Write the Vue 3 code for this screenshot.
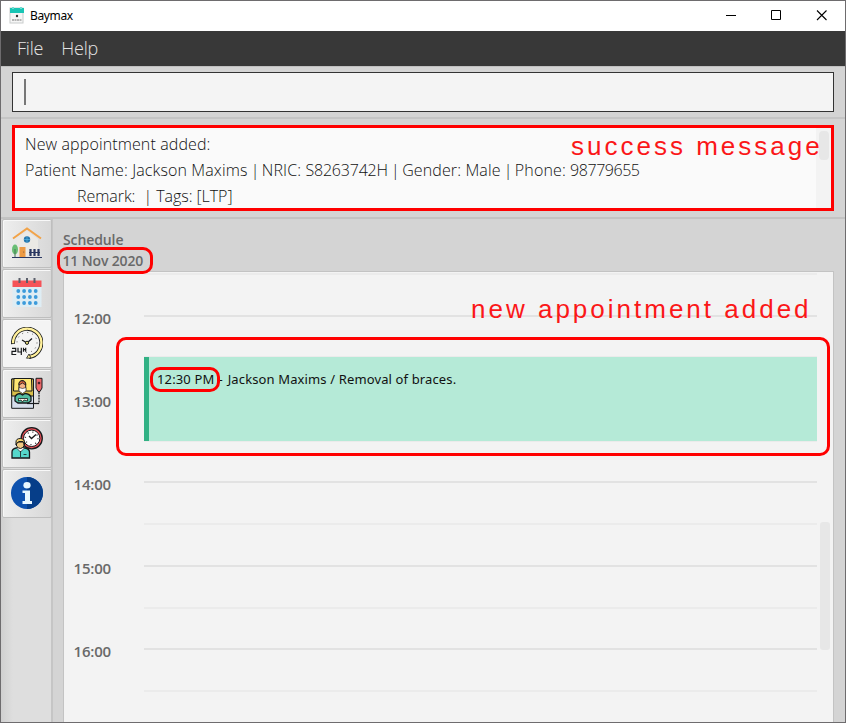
<script setup>
import { ref } from 'vue'

const menus = ['File', 'Help']
const command = ref('')
const navItems = ['home', 'calendar', 'schedule', 'patient', 'appointment', 'info']
const active = 'schedule'
const slots = [
  { hour: '', half: true },
  { hour: '12:00' }, { hour: '', half: true },
  { hour: '13:00' }, { hour: '', half: true },
  { hour: '14:00' }, { hour: '', half: true },
  { hour: '15:00' }, { hour: '', half: true },
  { hour: '16:00' }, { hour: '', half: true },
]
</script>

<template>
  <div class="window">
    <header class="titlebar">
      <svg class="logo" width="16" height="17" viewBox="0 0 16 17">
        <rect x="1" y="1" width="13" height="15" fill="#f6f6f6" stroke="#c9cccc" />
        <path d="M1 1H15V6H1Z" fill="#19c5b5" />
        <path d="M4 0V2M12 0V2" stroke="#71ded3" stroke-width="2" />
        <circle cx="8" cy="9" r="1.2" fill="#333" />
        <path d="M3 13H13" stroke="#777" stroke-dasharray="2 .5" />
      </svg>
      <span class="title">Baymax</span>
      <div class="controls">
        <svg width="102" height="12" viewBox="0 0 102 12">
          <path d="M0 5.500H10M45.500 .5H54.500V9.500H45.500Z" fill="none" stroke="#000" />
          <path d="M91 .5L100.500 10M100.500 .5L91 10" stroke="#000" stroke-width="1.100" />
        </svg>
      </div>
    </header>
    <nav class="menubar"><span v-for="m in menus" :key="m">{{ m }}</span></nav>
    <div class="command"><div class="field"><i class="caret"></i>{{ command }}</div></div>
    <section class="result">
      <div class="result-box">
        <div class="result-text">
          <p>New appointment added:</p>
          <p>Patient Name: Jackson Maxims<span class="pipe"> | </span>NRIC: <span class="nric">S8263742H</span><span class="pipe"> | </span>Gender: Male<span class="pipe"> | </span>Phone: <span class="phone">98779655</span></p>
          <p class="indent">Remark:&nbsp; | Tags: [LTP]</p>
        </div>
        <div class="result-scroll"><i></i></div>
      </div>
      <span class="note success">success message</span>
    </section>
    <main class="body">
      <aside class="sidebar">
        <button v-for="item in navItems" :key="item" :class="{ active: item === active }" :aria-label="item">
          <svg v-if="item === 'home'" width="32" height="32" viewBox="0 0 32 32">
            <path d="M6 12L16 4L27 12V29H6Z" fill="#ebe9e5" />
            <path d="M2 11.500L16 1.500L30 11.500" fill="none" stroke="#f2a348" stroke-width="2" />
            <circle cx="16" cy="12.500" r="3.200" fill="#2376ad" />
            <path d="M16 9.500V15.500M13 12.500H19" stroke="#57b5df" stroke-width=".7" />
            <rect x="8.500" y="20" width="6" height="10" fill="#ed9a43" />
            <circle cx="12.700" cy="25" r=".6" fill="#74513e" />
            <ellipse cx="4" cy="22.500" rx="3" ry="5" fill="#69be75" />
            <path d="M4 22V30" stroke="#467b55" />
            <path d="M19.500 22V29M23.500 22V29M27.500 22V29" stroke="#2b3862" stroke-width="2.200" />
            <path d="M18 25.500H29M1 30.500H31" stroke="#2b3862" stroke-width="1.200" />
          </svg>
          <svg v-else-if="item === 'calendar'" width="32" height="32" viewBox="0 0 32 32">
            <path d="M1.500 9H30.500V30H1.500Z" fill="#deedf4" />
            <path d="M1.500 3.500H30.500V10H1.500Z" fill="#f55358" />
            <path d="M8.500 1V6M16 1V6M23.500 1V6" stroke="#5b5f6b" stroke-width="2" />
            <g fill="#3c9bdb">
              <template v-for="y in 3" :key="y"><circle v-for="x in 4" :key="x" :cx="x * 5.8 + 1.5" :cy="y * 6 + 8" r="1.900" /></template>
            </g>
          </svg>
          <svg v-else-if="item === 'schedule'" width="32" height="32" viewBox="0 0 32 32">
            <path d="M2 17A14.200 14.200 0 1 1 18 30" fill="none" stroke="#17191b" stroke-width="4" />
            <path d="M2 16.300A14.200 14.200 0 1 1 19 29.800" fill="none" stroke="#fff09b" stroke-width="2.400" />
            <path d="M18 27L15.500 31.200L20 31Z" fill="#fff09b" stroke="#17191b" stroke-width=".8" />
            <circle cx="16" cy="15.500" r="10" fill="none" stroke="#555" stroke-dasharray="1 4.230" />
            <path d="M11 13L16 16L21 11.500" fill="none" stroke="#17191b" stroke-width="1.300" />
            <circle cx="16" cy="15.800" r="1.600" fill="#eadf7b" stroke="#17191b" />
            <path d="M0 19H14V29H0Z" fill="#f4f4f4" />
            <path d="M1 21.300H4.700V24.300H1V27.500H5.200M7 20.700V25H11M10.300 20.700V28M12.500 20.700V24.800M12.500 22.700H14.700V24.800M14.700 20.700V22.500" fill="none" stroke="#17191b" stroke-width="1.200" />
          </svg>
          <svg v-else-if="item === 'patient'" width="32" height="32" viewBox="0 0 32 32" stroke="#171a1c">
            <path d="M.7 2H22.500V31.300H.7Z" fill="#d5deec" />
            <path d="M.7 2H22.500V19H.7Z" fill="#d9bf4a" />
            <path d="M3 1.500H20.500L21 14H2.500Z" fill="#ffe872" />
            <path d="M8 8C7 2 15.500 2 14.700 8V13L11.500 16L8 13Z" fill="#f4b489" />
            <path d="M8 8C7.500 2.500 15 2.500 14.700 8L11.500 6Z" fill="#d9653c" stroke-width=".8" />
            <path d="M8 10.500L11.500 11.500L15 10.500V14L11.500 16.500L8 14Z" fill="#fff" stroke-width=".6" />
            <path d="M4 24V20Q5 17 9 16.500L11.500 18L14 16.500Q19 17 20 20V24L17 26H7Z" fill="#54bea2" stroke-width="1.300" />
            <path d="M7.500 21.500H16.500V24L13 23L11.500 25L10 23L7.500 24Z" fill="#f7efe2" stroke-width=".8" />
            <path d="M25 1.300H31V11L29 14.500H27L25 11Z" fill="#ed686a" />
            <path d="M28 15V26.500" fill="none" stroke-width="1.200" stroke-dasharray="2 .8" />
            <path d="M28 26.500H16" stroke-width="1.200" />
            <circle cx="28" cy="6" r="1" fill="#4e1c27" stroke-width=".6" />
          </svg>
          <svg v-else-if="item === 'appointment'" width="32" height="32" viewBox="0 0 32 32" stroke="#17191b">
            <circle cx="20.700" cy="11.300" r="10.600" fill="#e85159" stroke-width="1.300" />
            <circle cx="20.700" cy="11.300" r="8.200" fill="#fff" />
            <circle cx="20.700" cy="11.300" r="6.300" fill="none" stroke-width="1.200" stroke-dasharray="1 3.950" />
            <path d="M18 9L20.500 11.500L25 7.500" fill="none" stroke-width="1.300" />
            <path d="M1 31V25Q1 22 5 21L8 20H11L14 21Q18.500 22 18.500 25V31Z" fill="#55d7cb" stroke-width="1.300" />
            <path d="M5.500 21L9.500 25L13.500 21L11 20H8Z" fill="#fff" stroke-width=".7" />
            <path d="M5.500 15V19Q9.500 24 13 19V15Z" fill="#f1c983" />
            <path d="M5 18V15Q5 11.500 9.300 11.500Q13.500 11.500 13.500 16V18L12 14.500H8L6 16Z" fill="#f6d36c" />
            <path d="M9.500 24V30M12.500 27.500H15.500" stroke-width=".8" />
          </svg>
          <svg v-else width="32" height="32" viewBox="0 0 32 32">
            <circle cx="16" cy="16" r="16" fill="#0d51ae" />
            <path d="M16 0A16 16 0 0 1 16 32Z" fill="#063e89" />
            <ellipse cx="16" cy="8.300" rx="3.600" ry="3.300" fill="#e8f8ff" />
            <path d="M11.500 13.500H19V24H21V27H11.500V24H14V16H11.500Z" fill="#e8f8ff" />
          </svg>
        </button>
      </aside>
      <section class="content">
        <div class="heading"><h1>Schedule</h1><h2>11 Nov 2020</h2><i class="mark date-mark"></i></div>
        <div class="timeline">
          <div class="slots">
            <div v-for="(s, i) in slots" :key="i" class="slot"><b>{{ s.hour }}</b><span :class="{ half: s.half }"></span></div>
          </div>
          <article class="event">12:30 PM<span class="dash"> - </span>Jackson Maxims / Removal of braces.</article>
          <i class="scroll-thumb"></i>
          <i class="mark event-mark"></i>
          <i class="mark time-mark"></i>
          <span class="note added">new appointment added</span>
        </div>
      </section>
    </main>
  </div>
</template>

<style>
body { margin: 0; overflow: hidden; }
</style>

<style scoped>
* { box-sizing: border-box; }
p, h1, h2 { margin: 0; }
.window { width: 846px; height: 723px; border: 1px solid #6e6c6e; background: #d4d4d4; display: flex; flex-direction: column; overflow: hidden; font-family: "Open Sans", "Noto Sans", sans-serif; }
.titlebar { height: 30px; flex: none; background: #fff; display: flex; align-items: center; padding-left: 8px; }
.logo { margin-top: -1px; }
.title { font: 12px "Noto Sans", sans-serif; letter-spacing: -.35px; margin: -1px 0 0 5px; color: #000; }
.controls { margin-left: auto; padding-right: 17px; height: 12px; }
.controls svg { display: block; }
.menubar { height: 35px; flex: none; background: #383838; color: #e4e4e4; display: flex; align-items: center; padding: 0 0 2px 16px; gap: 18px; font-size: 18px; font-weight: 300; letter-spacing: -.2px; }
.command { height: 53px; flex: none; padding: 6px 11px; border-top: 1px solid #c0c0c0; border-bottom: 2px solid #c5c5c5; }
.field { height: 40px; margin-top: -1px; border: 1px solid #333; background: #f4f4f4; padding: 6px 11px; }
.caret { display: block; width: 2px; height: 26px; background: #777; }
.result { position: relative; height: 100px; flex: none; padding: 6px 11px; border-bottom: 2px solid #c3c3c3; }
.result-box { height: 86px; border: 3px solid #f00; background: #fafafa; display: flex; }
.result-text { flex: 1; padding: 3px 10px; font-size: 16px; font-weight: 300; line-height: 26px; letter-spacing: .12px; color: #111; white-space: pre; }
.pipe { letter-spacing: -.9px; }
.nric { letter-spacing: -.2px; }
.phone { letter-spacing: -.45px; }
.indent { padding-left: 52px; letter-spacing: -.05px; }
.result-scroll { width: 15px; background: #f3f3f3; padding: 3px 2px 0 3px; }
.result-scroll i { display: block; height: 29px; border-radius: 4px; background: #e7e7e7; }
.note { position: absolute; white-space: pre; color: #fb1718; font-family: "Liberation Sans", sans-serif; font-size: 26px; line-height: 30px; letter-spacing: 3px; }
.success { left: 570px; top: 12px; }
.body { flex: 1; min-height: 0; display: flex; }
.sidebar { width: 52px; border-right: 2px solid #c5c5c5; background: linear-gradient(90deg, #d0d0d0, #dedede 12px); padding-left: 1px; display: flex; flex-direction: column; gap: 1px; }
.sidebar button { width: 50px; height: 49px; flex: none; padding: 0 0 1px; border: 1px solid #bebebe; border-radius: 2px; background: linear-gradient(90deg, #eee, #d8d8d8); display: flex; align-items: center; justify-content: center; box-shadow: inset 1px 1px #f8f8f8; }
.sidebar button.active { background: #f4f4f4; }
.sidebar svg { display: block; }
.content { flex: 1; min-width: 0; display: flex; flex-direction: column; padding: 0 11px 0 10px; }
.heading { position: relative; height: 52px; flex: none; padding-top: 10px; color: #696969; }
.heading h1, .heading h2 { font-size: 14px; line-height: 21px; font-weight: 600; letter-spacing: -.1px; }
.heading h2 { margin-left: -.5px; letter-spacing: -.15px; }
.timeline { position: relative; flex: 1; min-height: 0; border: 1px solid #c3c3c3; border-width: 1px 1px 0; background: #f3f3f3; }
.slots { height: 100%; overflow: hidden; padding: 1px 16px 0 9px; }
.slot { height: 41.700px; display: flex; align-items: flex-start; }
.slot b { width: 71px; padding-left: .5px; font-size: 15px; line-height: 20px; margin-top: -7px; font-weight: 600; letter-spacing: -.2px; color: #696969; }
.slot span { flex: 1; height: 2px; background: #e2e2e2; }
.slot span.half { background: #ebebeb; }
.event { position: absolute; left: 80px; top: 84.500px; width: 673px; height: 84px; border-left: 5px solid #31b184; background: #b5ead7; padding: 12.500px 8px; font: 13px/21px "Noto Sans", sans-serif; letter-spacing: .13px; color: #111; white-space: pre; }
.dash { letter-spacing: .8px; }
.scroll-thumb { position: absolute; left: 756px; top: 250px; width: 10px; height: 128px; border-radius: 3px; background: #e7e7e7; }
.mark { position: absolute; border: 3px solid #f00; border-radius: 10px; }
.date-mark { left: -6px; top: 28px; width: 96px; height: 27px; z-index: 1; }
.event-mark { left: 52px; top: 65px; width: 714px; height: 119px; }
.time-mark { left: 86px; top: 95px; width: 70px; height: 25px; }
.added { left: 407px; top: 22px; }
</style>
